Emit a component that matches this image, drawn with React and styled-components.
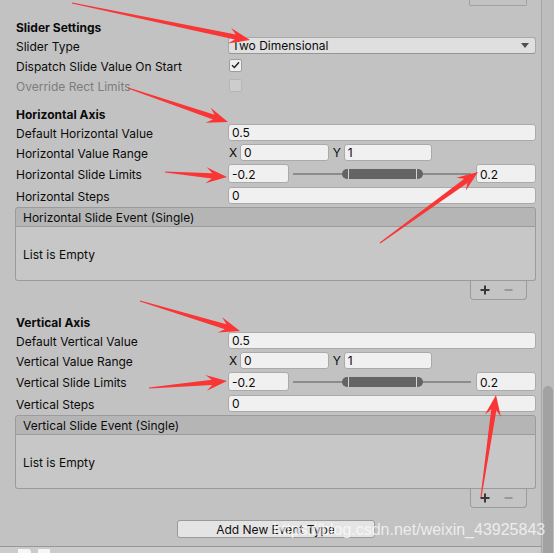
import React from 'react';
import styled, { createGlobalStyle } from 'styled-components';

const GlobalStyle = createGlobalStyle`
  html, body {
    margin: 0;
    padding: 0;
    background: #c2c2c2;
  }
  body {
    font-family: Inter, "Noto Sans", sans-serif;
    font-size: 12px;
    color: #0b0b0b;
  }
`;

const Page = styled.div`
  position: relative;
  width: 554px;
  height: 553px;
  overflow: hidden;
  display: flex;
  background: #c2c2c2;
`;

const MainColumn = styled.div`
  flex: 1;
  display: flex;
  flex-direction: column;
`;

const Inspector = styled.div`
  flex: 1;
  display: flex;
  flex-direction: column;
  padding: 0 5px 0 15px;
`;

const ScrollBar = styled.div`
  width: 13px;
  box-sizing: border-box;
  border-left: 1px solid #a6a6a6;
  background: #bdbdbd;
  display: flex;
  flex-direction: column;
`;

const ScrollThumb = styled.div`
  flex: 1;
  margin: 386px 1px 0 1px;
  background: #a2a2a2;
  border-radius: 5px 5px 0 0;
`;

const TopStub = styled.div`
  align-self: flex-end;
  width: 58px;
  height: 6px;
  box-sizing: border-box;
  margin-right: 9px;
  border: 1px solid #a0a0a0;
  border-top: none;
  border-radius: 0 0 2px 2px;
`;

const SectionTitle = styled.div`
  height: 18px;
  box-sizing: border-box;
  padding: 3px 0 0 1px;
  line-height: 15px;
  margin-top: ${p => p.$top}px;
  font-weight: 700;
`;

const Row = styled.div`
  display: grid;
  grid-template-columns: 213px 1fr;
  align-items: center;
  height: ${p => p.$h || 20}px;
`;

const Label = styled.div`
  padding: 2px 0 0 1px;
  white-space: nowrap;
  color: ${p => (p.$disabled ? '#7d7d7d' : '#0b0b0b')};
`;

const TextField = styled.div`
  height: ${p => p.$h || 17}px;
  width: ${p => (p.$w ? `${p.$w}px` : 'auto')};
  flex: ${p => (p.$w ? 'none' : '1')};
  box-sizing: border-box;
  background: #f0f0f0;
  border: 1px solid #aaaaaa;
  border-radius: 3px;
  padding: 1px 0 0 3px;
  display: flex;
  align-items: center;
  white-space: nowrap;
`;

const Dropdown = styled.div`
  height: 17px;
  box-sizing: border-box;
  background: #dfdfdf;
  border: 1px solid #a8a8a8;
  border-bottom-color: #959595;
  border-radius: 3px;
  padding: 1px 6px 0 3px;
  display: flex;
  align-items: center;
  justify-content: space-between;
`;

const Checkbox = styled.div`
  width: 13px;
  height: 13px;
  margin-left: 1px;
  box-sizing: border-box;
  border: 1px solid ${p => (p.$disabled ? '#b6b6b6' : '#9d9d9d')};
  background: ${p => (p.$disabled ? '#cdcdcd' : '#f0f0f0')};
  border-radius: 2px;
  display: flex;
  align-items: center;
  justify-content: center;
`;

const VectorGrid = styled.div`
  display: grid;
  grid-template-columns: repeat(3, 1fr);
  column-gap: 3px;
`;

const VectorPart = styled.div`
  display: flex;
  align-items: center;
`;

const AxisLabel = styled.span`
  width: 12px;
  padding: 1px 0 0 1px;
  box-sizing: border-box;
`;

const LimitsLine = styled.div`
  display: flex;
  align-items: center;
`;

const RangeTrack = styled.div`
  flex: 1;
  height: 19px;
  margin: 0 5px 0 4px;
  display: flex;
  align-items: center;
  background: linear-gradient(#8c8c8c, #8c8c8c) center / 100% 2px no-repeat;
`;

const RangeThumb = styled.div`
  height: 10px;
  display: flex;
`;

const ThumbCap = styled.div`
  width: 6px;
  background: #646464;
  border-radius: ${p => (p.$side === 'left' ? '5px 0 0 5px' : '0 5px 5px 0')};
`;

const ThumbDivider = styled.div`
  width: 1px;
  background: #d4d4d4;
`;

const ThumbBody = styled.div`
  flex: 1;
  background: #646464;
`;

const EventBox = styled.div`
  display: flex;
  flex-direction: column;
  margin-top: 2px;
`;

const EventHeader = styled.div`
  height: 20px;
  box-sizing: border-box;
  background: #b5b5b5;
  border: 1px solid #9b9b9b;
  border-radius: 3px 3px 0 0;
  padding: 1px 0 0 7px;
  line-height: 18px;
`;

const EventBody = styled.div`
  height: 54px;
  box-sizing: border-box;
  background: #c7c7c7;
  border: 1px solid #9b9b9b;
  border-top: none;
  border-radius: 0 0 3px 3px;
  padding: 2px 0 0 7px;
  display: flex;
  align-items: center;
`;

const FooterTab = styled.div`
  align-self: flex-end;
  width: 57px;
  height: 19px;
  box-sizing: border-box;
  margin-right: 9px;
  border: 1px solid #9b9b9b;
  border-top: none;
  border-radius: 0 0 4px 4px;
  background: #c4c4c4;
  display: flex;
  align-items: center;
  padding-left: 9px;
  gap: 14px;
`;

const AddButton = styled.button`
  align-self: center;
  width: 198px;
  height: 18px;
  margin-top: 12px;
  padding: 1px 0 0;
  box-sizing: border-box;
  background: #e4e4e4;
  border: 1px solid #9a9a9a;
  border-radius: 3px;
  font-family: Inter, "Noto Sans", sans-serif;
  font-size: 12px;
  color: #111;
`;

const BottomBar = styled.div`
  height: 6px;
  border-top: 1px solid #979797;
  background: #cbcbcb;
  display: flex;
  align-items: flex-end;
  padding-left: 18px;
  gap: 7px;
  overflow: hidden;
`;

const BarIcon = styled.div`
  width: ${p => p.$w}px;
  height: 4px;
  background: #f6f6f6;
  border-radius: ${p => (p.$fold ? '0 3px 0 0' : '1px 1px 0 0')};
`;

const Watermark = styled.div`
  position: absolute;
  left: 273px;
  top: 521px;
  font-family: "Liberation Sans", Arial, sans-serif;
  font-size: 16px;
  color: rgba(255, 255, 255, 0.72);
  white-space: nowrap;
  pointer-events: none;
`;

const Annotations = styled.svg`
  position: absolute;
  left: 0;
  top: 0;
  pointer-events: none;
`;

const arrows = [
  [[72, 3], [250, 40]],
  [[128, 88], [228, 122]],
  [[165, 172], [227, 177]],
  [[380, 243], [478, 172]],
  [[140, 301], [240, 331]],
  [[149, 388], [227, 381]],
  [[481, 497], [496, 395]],
];

const arrowPoints = ([x1, y1], [x2, y2]) => {
  const dx = x2 - x1;
  const dy = y2 - y1;
  const len = Math.hypot(dx, dy);
  const ux = dx / len;
  const uy = dy / len;
  const nx = -uy;
  const ny = ux;
  const notch = 15;
  const head = 21;
  const hw = 8;
  const sw = 2.6;
  const bx = x2 - ux * notch;
  const by = y2 - uy * notch;
  const hx = x2 - ux * head;
  const hy = y2 - uy * head;
  return [
    [x1 + nx * 0.5, y1 + ny * 0.5],
    [bx + nx * sw, by + ny * sw],
    [hx + nx * hw, hy + ny * hw],
    [x2, y2],
    [hx - nx * hw, hy - ny * hw],
    [bx - nx * sw, by - ny * sw],
    [x1 - nx * 0.5, y1 - ny * 0.5],
  ].map(p => p.map(v => v.toFixed(1)).join(',')).join(' ');
};

const CheckMark = () => (
  <svg width="9" height="8" viewBox="0 0 9 8">
    <path d="M1 4.2 L3.4 6.4 L8 1.2" fill="none" stroke="#222" strokeWidth="1.4" />
  </svg>
);

const DropArrow = () => (
  <svg width="8" height="5" viewBox="0 0 8 5">
    <path d="M0 0 L8 0 L4 5 Z" fill="#505050" />
  </svg>
);

const PlusIcon = () => (
  <svg width="10" height="10" viewBox="0 0 10 10">
    <path d="M5 0.5 V9.5 M0.5 5 H9.5" stroke="#383838" strokeWidth="2" />
  </svg>
);

const MinusIcon = () => (
  <svg width="9" height="10" viewBox="0 0 9 10">
    <path d="M0.5 5 H8.5" stroke="#8a8a8a" strokeWidth="1.5" />
  </svg>
);

const MinMaxSlider = ({ min, max, from, width }) => (
  <LimitsLine>
    <TextField $w={61} $h={19}>{min}</TextField>
    <RangeTrack>
      <RangeThumb style={{ marginLeft: `${from}%`, width: `${width}%` }}>
        <ThumbCap $side="left" />
        <ThumbDivider />
        <ThumbBody />
        <ThumbDivider />
        <ThumbCap $side="right" />
      </RangeThumb>
    </RangeTrack>
    <TextField $w={60} $h={19}>{max}</TextField>
  </LimitsLine>
);

const AxisSection = ({ name, top }) => (
  <>
    <SectionTitle $top={top}>{name} Axis</SectionTitle>
    <Row>
      <Label>Default {name} Value</Label>
      <TextField>0.5</TextField>
    </Row>
    <Row>
      <Label>{name} Value Range</Label>
      <VectorGrid>
        <VectorPart>
          <AxisLabel>X</AxisLabel>
          <TextField>0</TextField>
        </VectorPart>
        <VectorPart>
          <AxisLabel>Y</AxisLabel>
          <TextField>1</TextField>
        </VectorPart>
      </VectorGrid>
    </Row>
    <Row $h={23}>
      <Label>{name} Slide Limits</Label>
      <MinMaxSlider min="-0.2" max="0.2" from={27.5} width={45.5} />
    </Row>
    <Row>
      <Label>{name} Steps</Label>
      <TextField>0</TextField>
    </Row>
    <EventBox>
      <EventHeader>{name} Slide Event (Single)</EventHeader>
      <EventBody>List is Empty</EventBody>
      <FooterTab>
        <PlusIcon />
        <MinusIcon />
      </FooterTab>
    </EventBox>
  </>
);

export default function App() {
  return (
    <Page>
      <GlobalStyle />
      <MainColumn>
        <Inspector>
          <TopStub />
          <SectionTitle $top={11}>Slider Settings</SectionTitle>
          <Row>
            <Label>Slider Type</Label>
            <Dropdown>
              <span>Two Dimensional</span>
              <DropArrow />
            </Dropdown>
          </Row>
          <Row>
            <Label>Dispatch Slide Value On Start</Label>
            <Checkbox>
              <CheckMark />
            </Checkbox>
          </Row>
          <Row>
            <Label $disabled>Override Rect Limits</Label>
            <Checkbox $disabled />
          </Row>
          <AxisSection name="Horizontal" top={9} />
          <AxisSection name="Vertical" top={12} />
          <AddButton>Add New Event Type</AddButton>
        </Inspector>
        <BottomBar>
          <BarIcon $w={13} $fold />
          <BarIcon $w={12} />
        </BottomBar>
      </MainColumn>
      <ScrollBar>
        <ScrollThumb />
      </ScrollBar>
      <Watermark>https://blog.csdn.net/weixin_43925843</Watermark>
      <Annotations width="554" height="553" viewBox="0 0 554 553">
        {arrows.map(([from, to], i) => (
          <polygon key={i} points={arrowPoints(from, to)} fill="#fa3535" />
        ))}
      </Annotations>
    </Page>
  );
}
